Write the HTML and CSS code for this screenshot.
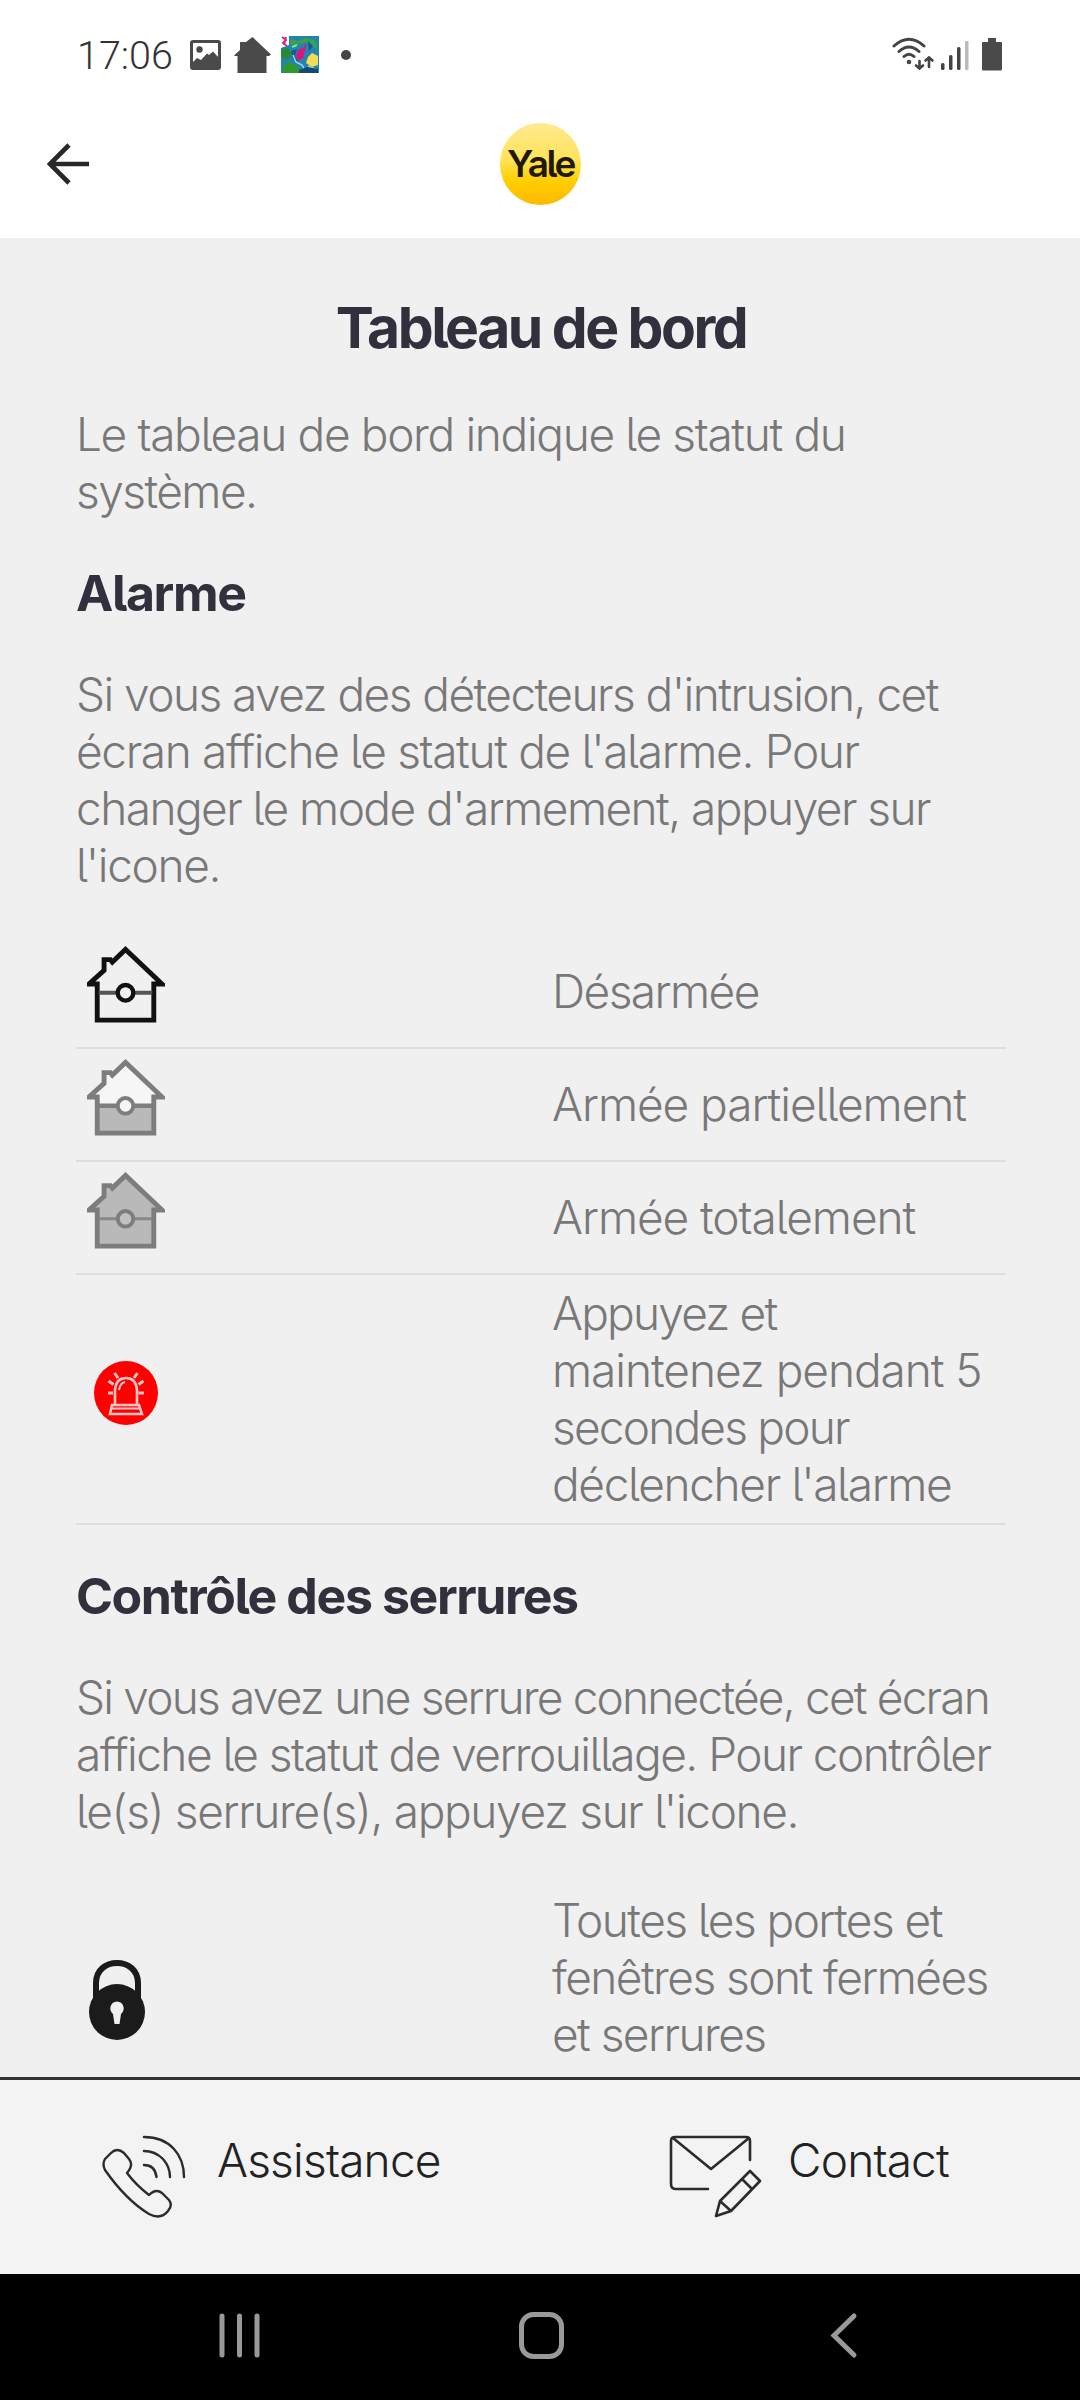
FILE: index.html
```html
<!DOCTYPE html>
<html lang="fr">
<head>
<meta charset="utf-8">
<title>Tableau de bord</title>
<link rel="stylesheet" href="styles.css">
</head>
<body>
<svg width="0" height="0" class="defs" aria-hidden="true">
  <defs>
    <g id="house-frame" fill="none" stroke-linejoin="miter">
      <path d="M2 39H10.500V76H68.500V39H77L39.500 3.500 26 16.500 24 14H17.500V25Z" stroke-width="5"/>
    </g>
  </defs>
</svg>
<div class="screen">
  <header class="statusbar">
    <div class="status-left">
      <span class="clock">17:06</span>
      <svg class="ic-image" width="31" height="30" viewBox="0 0 31 30"><rect x="1.500" y="1.500" width="28" height="27" rx="1.500" fill="none" stroke="#4a4a4a" stroke-width="3"/><circle cx="9.500" cy="9.500" r="3.200" fill="#4a4a4a"/><path d="M2 23L7 18 11 20 17 13.500 19 15 23 11.500 29 18V28H2Z" fill="#4a4a4a"/></svg>
      <svg class="ic-home" width="37" height="36" viewBox="0 0 37 36"><path d="M0 18.500L6 13V5H12L18.500 0 37 17.500 35 19H32.500V36H3.500V19H1Z" fill="#4a4a4a"/></svg>
      <svg class="ic-game" width="38" height="37" viewBox="0 0 38 37"><rect width="38" height="37" fill="#2384ad"/><path d="M0 0H8V9L0 12Z" fill="#fff"/><path d="M1 1L5 4 2 7 6 10M5 1L3 9" stroke="#d62a80" stroke-width="2" fill="none"/><path d="M10 3L18 5 24 2 34 4 37 14 33 11 28 6 18 8 14 13 9 8Z" fill="#39a34c"/><path d="M0 14L7 12 11 18 7 24 0 21Z" fill="#278a32"/><path d="M2 31L8 26 17 30 19 37H2Z" fill="#31992b"/><path d="M10 15L16 13 14 20 18 26 12 23ZM27 5L32 10 28 15Z" fill="#1558a0"/><path d="M25 7L22 12 17 14 15 20 17 25 22 22 24 15Z" fill="#dc1679"/><path d="M27 21L31 17 37 20V29L31 31 25 27Z" fill="#f2dc55"/><path d="M12 19L15 26 21 29 24 34M27 30L34 33M11 11L16 9" stroke="#9ad8ec" stroke-width="1.500" fill="none"/><path d="M18 34L26 31 37 33V37H18Z" fill="#17486d"/></svg>
      <span class="dot"></span>
    </div>
    <svg width="116" height="36" viewBox="0 0 116 36"><g fill="none" stroke="#444" stroke-width="3" stroke-linecap="round"><path d="M3 9Q18 -4.500 33 9M8 14.500Q18 5.500 28 14.500M13 19.500Q18 15 23 19.500"/><path d="M28.500 24V31M25 28.500L28.500 31.500 32 28.500M38 30V21M34.500 23.500L38 20.500 41.500 23.500" stroke-width="2.600"/></g><circle cx="18" cy="25" r="2.300" fill="#444"/><g fill="#444"><rect x="50" y="26" width="3.500" height="7" rx="1.500"/><rect x="58" y="18" width="3.500" height="15" rx="1.500"/><rect x="66" y="10" width="3.500" height="23" rx="1.500"/></g><rect x="74" y="4" width="3.500" height="29" rx="1" fill="#bbb"/><path d="M97 1H105V5H110Q111 5 111 6V32Q111 33.500 109.500 33.500H92Q91 33.500 91 32V6Q91 5 92 5H97Z" fill="#4a4a4a"/></svg>
  </header>
  <nav class="appbar">
    <svg width="44" height="44" viewBox="0 0 44 44"><path d="M22 3L3 22 22 41M3 22H42" fill="none" stroke="#282828" stroke-width="4.600"/></svg>
    <div class="logo">Yale</div>
  </nav>
  <main class="content">
    <h1>Tableau de bord</h1>
    <p class="intro">Le tableau de bord indique le statut du<br><span class="snug">système.</span></p>
    <h2>Alarme</h2>
    <p><span class="snug">Si vous avez des détecteurs d'intrusion, cet</span><br>écran affiche le statut de l'alarme. Pour<br><span class="snug">changer le mode d'armement, appuyer sur</span><br>l'icone.</p>
    <div class="table">
      <div class="row">
        <svg class="house" width="78" height="78" viewBox="0 0 80 80" stroke="#111"><use href="#house-frame"/><path d="M12 48H67" stroke="#555" stroke-width="4"/><circle cx="39.500" cy="48" r="8" fill="#f0f0f0" stroke-width="4.500"/></svg>
        <span class="snug">Désarmée</span>
      </div>
      <div class="row">
        <svg class="house" width="78" height="78" viewBox="0 0 80 80" stroke="#7d7d7d"><path d="M2 39L17 25V14H24L26 16 39.500 3.500 77 39H68.500V48H10.500V39Z" fill="#f6f6f6" stroke="none"/><path d="M10 48H69V76H10Z" fill="#b9b9b9" stroke="none"/><use href="#house-frame"/><path d="M12 48H67" stroke-width="4.500"/><circle cx="39.500" cy="48" r="8" fill="#f6f6f6" stroke-width="4"/></svg>
        <span class="loose">Armée partiellement</span>
      </div>
      <div class="row">
        <svg class="house" width="78" height="78" viewBox="0 0 80 80" stroke="#7d7d7d"><path d="M2 39L17 25V14H24L26 16 39.500 3.500 77 39H68.500V76H10.500V39Z" fill="#b9b9b9" stroke="none"/><use href="#house-frame"/><path d="M12 48H67" stroke="#888" stroke-width="3"/><circle cx="39.500" cy="48" r="8" fill="#c0c0c0" stroke-width="4"/></svg>
        <span class="loose">Armée totalement</span>
      </div>
      <div class="row">
        <svg class="siren" width="64" height="64" viewBox="0 0 64 64"><circle cx="32" cy="32" r="32" fill="#f00"/><g fill="none" stroke="#ffc4c4" stroke-width="2.600"><path d="M21 44V29Q22 17 32 17T43 29V44M18 44H45L48 53H16Z"/><path d="M18 47.500H46" stroke-width="2"/><path d="M25 29Q26 22 31 21" stroke-width="2"/><path d="M14 32H19M44.500 32H50M14.500 20L19.500 23.500M49.500 20L44.500 23.500M20.500 12L24 17M43.500 12L40 17" stroke-width="3"/></g></svg>
        <span><span class="tight">Appuyez et</span><br><span class="loose">maintenez pendant 5</span><br><span class="tight">secondes pour</span><br>déclencher l'alarme</span>
      </div>
    </div>
    <h2 class="locks-title">Contrôle des serrures</h2>
    <p><span class="tight">Si vous avez une serrure connectée, cet écran</span><br><span class="snug">affiche le statut de verrouillage. Pour contrôler</span><br>le(s) serrure(s), appuyez sur l'icone.</p>
    <div class="table locks">
      <div class="row tall">
        <svg class="lock" width="56" height="80" viewBox="0 0 56 80"><path d="M7 40V23C7 10 17 3 28 3S49 10 49 23V40" fill="none" stroke="#1b1b1b" stroke-width="6"/><circle cx="28" cy="52" r="28" fill="#1b1b1b"/><path d="M28 41.500A7 7 0 0 1 32 54L30.500 64H25.500L24 54A7 7 0 0 1 28 41.500Z" fill="#f0f0f0"/></svg>
        <span><span class="snug">Toutes les portes et</span><br><span class="snug">fenêtres sont fermées</span><br><span class="snug">et serrures</span></span>
      </div>
    </div>
  </main>
  <footer class="actions">
    <div class="action phone">
      <svg width="86" height="86" viewBox="0 0 86 86" fill="none" stroke="#2b2b2b" stroke-width="2.400" stroke-linecap="round" stroke-linejoin="round"><path d="M42 3Q61 3 72 15Q82 26 82 43M42 17Q53 17 61 25Q68 33 68 43M42 31Q53 31 54.500 43"/><path d="M9 19Q15 13 22 19L27 25Q32 31 25 39Q34 51 47 61Q54 54 60 59L67 66Q71 71 66 77Q59 86 47 80Q24 66 3 36Q0 30 3 25Z"/></svg>
      <span>Assistance</span>
    </div>
    <div class="action mail">
      <svg width="94" height="84" viewBox="0 0 94 84" fill="none" stroke="#2b2b2b" stroke-width="2.600" stroke-linecap="round" stroke-linejoin="round"><path d="M39 55H7Q2 55 2 50V7Q2 3 6 3H77Q81 3 81 7V26M4 4L42 35 80 4"/><path d="M81 37L91 47 62 77 47 82 51 67ZM73 45L83 55M51 67L62 77"/></svg>
      <span>Contact</span>
    </div>
  </footer>
  <nav class="sysnav">
    <svg width="1080" height="126" viewBox="0 0 1080 126" fill="none" stroke="#999" stroke-width="5" stroke-linecap="round"><path d="M222 42V81M239.500 42V81M257 42V81"/><rect x="521.500" y="40.500" width="40" height="42" rx="12"/><path d="M854 42L834 61.500 854 81"/></svg>
  </nav>
</div>
</body>
</html>
```
FILE: styles.css
```css
* { box-sizing: border-box; }
body { margin: 0; background: #fff; }
svg { display: block; flex: none; }
.defs { position: absolute; }

.screen {
  width: 1080px;
  height: 2400px;
  display: flex;
  flex-direction: column;
  overflow: hidden;
  font-family: Inter, "Liberation Sans", sans-serif;
  font-feature-settings: "cv05";
}

.statusbar {
  height: 109px;
  padding: 0 73px 0 77px;
  display: flex;
  align-items: center;
  justify-content: space-between;
}
.status-left { display: flex; align-items: center; }
.clock {
  width: 113px;
  padding-top: 2px;
  font: 300 39.5px/40px Roboto, sans-serif;
  color: #333;
  white-space: nowrap;
}
.ic-home { margin-left: 13px; }
.ic-game { margin-left: 10px; }
.dot {
  width: 10px;
  height: 10px;
  margin-left: 22px;
  border-radius: 50%;
  background: #444;
}

.appbar {
  height: 129px;
  padding: 0 46px 19px 47px;
  display: grid;
  grid-template-columns: 1fr auto 1fr;
  align-items: center;
}
.logo {
  width: 81px;
  height: 82px;
  border-radius: 50%;
  background: linear-gradient(#ffe98a 5%, #ffe25a 45%, #ffcf00 70%, #fdb900);
  color: #1f1a08;
  font-size: 37px;
  font-weight: 600;
  line-height: 82px;
  letter-spacing: -2.4px;
  text-align: center;
}

.content {
  flex: 1;
  min-height: 0;
  overflow: hidden;
  padding: 55px 74px 0 76px;
  background: #f0f0f0;
  color: #787878;
  font-size: 46px;
  font-weight: 300;
  line-height: 57px;
  letter-spacing: -1.35px;
  white-space: nowrap;
}
.tight { letter-spacing: -1.8px; }
.snug { letter-spacing: -1.55px; }
.loose { letter-spacing: -1.05px; }
h1, h2, p { margin: 0; }
h1 {
  color: #32303c;
  font-size: 57px;
  line-height: 70px;
  font-weight: 700;
  letter-spacing: -2.5px;
  text-align: center;
}
h2 {
  color: #32303c;
  font-size: 50px;
  line-height: 60px;
  font-weight: 700;
  letter-spacing: -1.4px;
  margin: 43px 0 43px;
}
.intro { margin-top: 43px; }
.table { margin-top: 42px; }
.row {
  min-height: 113px;
  padding: 10px 0;
  display: grid;
  grid-template-columns: 476px 1fr;
  align-items: center;
  border-bottom: 2px solid #dedede;
}
.house { margin: 0 0 13px 11px; }
.siren { margin: 0 0 13px 18px; }
.lock { margin: 0 0 12px 13px; }
.locks-title { margin-top: 41px; }
.locks { margin-top: 42px; }
.tall { height: 250px; }
.tall > span { align-self: start; }

.actions {
  height: 197px;
  flex: none;
  border-top: 3px solid #333;
  background: #f3f3f3;
  display: grid;
  grid-template-columns: 566px 1fr;
  color: #222;
  font-size: 46px;
  font-weight: 300;
  line-height: 52px;
  letter-spacing: -0.8px;
}
.action { display: flex; align-items: flex-start; padding-top: 54px; }
.phone { padding-left: 102px; gap: 29px; }
.mail { padding-left: 103px; gap: 25px; }

.sysnav { height: 126px; flex: none; background: #000; }
```
